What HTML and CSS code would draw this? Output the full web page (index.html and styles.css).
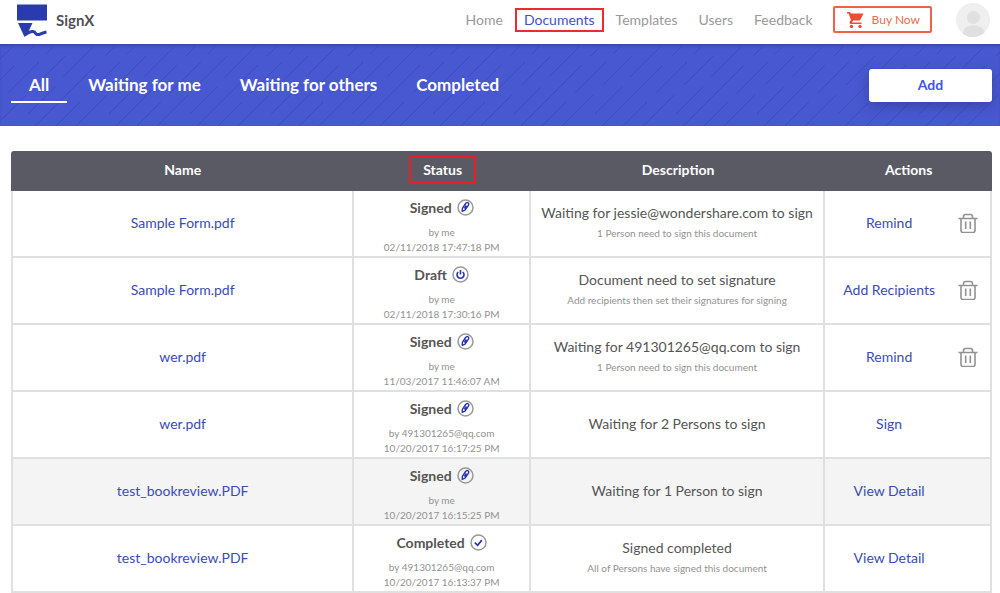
FILE: index.html
```html
<!DOCTYPE html>
<html lang="en">
<head>
<meta charset="utf-8">
<title>SignX – Documents</title>
<link rel="stylesheet" href="styles.css">
</head>
<body>
<svg class="sprite" aria-hidden="true">
  <symbol id="pen" viewBox="0 0 17 17">
    <circle cx="8.500" cy="8.500" r="7.500" fill="none" stroke="#999" stroke-width="1.500"/>
    <path d="M5.200 12.300l.2-3 3.200-4.800c.7-1 1.700-1.300 2.500-.7.8.5.900 1.500.2 2.500l-3.300 4.800zM7.400 9.500l2-3" fill="none" stroke="#2634b4" stroke-width="1.400" stroke-linejoin="round"/>
  </symbol>
  <symbol id="power" viewBox="0 0 17 17">
    <circle cx="8.500" cy="8.500" r="7.500" fill="none" stroke="#999" stroke-width="1.500"/>
    <path d="M6.300 6a3.500 3.500 0 1 0 4.400 0M8.500 4v4.500" fill="none" stroke="#2634b4" stroke-width="1.600"/>
  </symbol>
  <symbol id="check" viewBox="0 0 17 17">
    <circle cx="8.500" cy="8.500" r="7.500" fill="none" stroke="#999" stroke-width="1.500"/>
    <path d="M4.800 8.600l2.800 2.700 4.300-5.200" fill="none" stroke="#2634b4" stroke-width="1.700"/>
  </symbol>
  <symbol id="trash" viewBox="0 0 20 20">
    <path d="M.5 5.500h19M5.500 5V3.500q0-2 2-2h5q2 0 2 2V5M3 5.500v12q0 2 2 2h10q2 0 2-2v-12M7.700 8.500v7.500M12.300 8.500v7.500" fill="none" stroke="#929292" stroke-width="1.600"/>
  </symbol>
</svg>

<header class="topbar">
  <a class="brand" href="#">
    <svg class="logo" viewBox="0 0 32 33" aria-hidden="true">
      <path d="M1 1h30v16H1zM2 19.500h14.500l-4.500 9.500-3.500 4.500z" fill="#2a3bb0"/>
      <path d="M8.500 31.500C12 29.500 14 27.500 17 28s2 2.500 4 3c3 .6 3.500-1.500 9.500-2.500" fill="none" stroke="#2a3bb0" stroke-width="3"/>
    </svg>
    <span class="brand-name">SignX</span>
  </a>
  <nav class="nav">
    <a href="#">Home</a>
    <a class="current" href="#">Documents</a>
    <a href="#">Templates</a>
    <a href="#">Users</a>
    <a href="#">Feedback</a>
  </nav>
  <button class="buy" type="button">
    <svg class="cart" viewBox="0 0 18 18" aria-hidden="true">
      <path d="M1 1h3l1 1.500h12.500L14 9.500H7l-1 2h9.500V13H4.500q-1.500-.5-.8-2l1.200-2.200L2.600 2.500H1z" fill="#f04b34"/>
      <circle cx="5.500" cy="15.500" r="1.700" fill="#f04b34"/><circle cx="14" cy="15.500" r="1.700" fill="#f04b34"/>
    </svg>
    Buy Now
  </button>
  <button class="avatar" type="button" aria-label="Account">
    <svg viewBox="0 0 34 34" aria-hidden="true">
      <circle cx="17" cy="17" r="17" fill="#efefef"/>
      <circle cx="17.500" cy="14.500" r="6.500" fill="#e0e0e0"/>
      <path d="M7 31c.5-6 4-8.500 10.500-8.500S28 25 28.500 29.500A17 17 0 0 1 7 31z" fill="#e0e0e0"/>
    </svg>
  </button>
</header>

<section class="banner">
  <svg class="hatch" aria-hidden="true">
    <defs>
      <path id="strokes" d="M42 0L9 33M42 21L-19 82M63 0L51 12M83 0L73 10M66 18L35 49M92 12L63 41M53 51L22 82M82 43L55 70M26 58L2 82"/>
      <pattern id="rain" width="81" height="82" patternUnits="userSpaceOnUse" patternTransform="translate(54 0)">
        <g fill="none" stroke="#3e4dbd" stroke-width="1">
          <use href="#strokes"/><use href="#strokes" x="-81"/><use href="#strokes" x="81"/>
        </g>
      </pattern>
    </defs>
    <rect width="100%" height="100%" fill="url(#rain)"/>
  </svg>
  <nav class="tabs">
    <a class="active" href="#">All</a>
    <a href="#">Waiting for me</a>
    <a href="#">Waiting for others</a>
    <a href="#">Completed</a>
  </nav>
  <button class="add" type="button">Add</button>
</section>

<main class="content">
  <table class="docs">
    <colgroup><col class="c-name"><col class="c-status"><col class="c-desc"><col class="c-actions"></colgroup>
    <thead>
      <tr><th>Name</th><th><span class="marked">Status</span></th><th>Description</th><th>Actions</th></tr>
    </thead>
    <tbody>
      <tr>
        <td><a href="#">Sample Form.pdf</a></td>
        <td><div class="state">Signed <svg><use href="#pen"/></svg></div><div class="meta">by me<br>02/11/2018 17:47:18 PM</div></td>
        <td>Waiting for jessie@wondershare.com to sign<div class="note">1 Person need to sign this document</div></td>
        <td><div class="actions"><a href="#">Remind</a><button type="button" aria-label="Delete"><svg><use href="#trash"/></svg></button></div></td>
      </tr>
      <tr>
        <td><a href="#">Sample Form.pdf</a></td>
        <td><div class="state">Draft <svg><use href="#power"/></svg></div><div class="meta">by me<br>02/11/2018 17:30:16 PM</div></td>
        <td>Document need to set signature<div class="note">Add recipients then set their signatures for signing</div></td>
        <td><div class="actions"><a href="#">Add Recipients</a><button type="button" aria-label="Delete"><svg><use href="#trash"/></svg></button></div></td>
      </tr>
      <tr>
        <td><a href="#">wer.pdf</a></td>
        <td><div class="state">Signed <svg><use href="#pen"/></svg></div><div class="meta">by me<br>11/03/2017 11:46:07 AM</div></td>
        <td>Waiting for 491301265@qq.com to sign<div class="note">1 Person need to sign this document</div></td>
        <td><div class="actions"><a href="#">Remind</a><button type="button" aria-label="Delete"><svg><use href="#trash"/></svg></button></div></td>
      </tr>
      <tr>
        <td><a href="#">wer.pdf</a></td>
        <td><div class="state">Signed <svg><use href="#pen"/></svg></div><div class="meta">by 491301265@qq.com<br>10/20/2017 16:17:25 PM</div></td>
        <td>Waiting for 2 Persons to sign</td>
        <td><div class="actions"><a href="#">Sign</a></div></td>
      </tr>
      <tr class="hovered">
        <td><a href="#">test_bookreview.PDF</a></td>
        <td><div class="state">Signed <svg><use href="#pen"/></svg></div><div class="meta">by me<br>10/20/2017 16:15:25 PM</div></td>
        <td>Waiting for 1 Person to sign</td>
        <td><div class="actions"><a href="#">View Detail</a></div></td>
      </tr>
      <tr>
        <td><a href="#">test_bookreview.PDF</a></td>
        <td><div class="state">Completed <svg><use href="#check"/></svg></div><div class="meta">by 491301265@qq.com<br>10/20/2017 16:13:37 PM</div></td>
        <td>Signed completed<div class="note">All of Persons have signed this document</div></td>
        <td><div class="actions"><a href="#">View Detail</a></div></td>
      </tr>
    </tbody>
  </table>
</main>
</body>
</html>
```
FILE: styles.css
```css
* { box-sizing: border-box; }

body {
  margin: 0;
  background: #fff;
  color: #555;
  font: 14px/20px Lato, "Open Sans", sans-serif;
}

a { color: #3a4cb4; text-decoration: none; }
button { padding: 0; border: 0; background: none; font: inherit; cursor: pointer; }
.sprite { display: none; }

.topbar {
  display: flex;
  align-items: center;
  height: 44px;
  padding: 0 10px 5px 16px;
}
.brand { display: flex; align-items: center; gap: 8px; margin-right: auto; color: #50505a; }
.logo { width: 32px; height: 34px; }
.brand-name { font-size: 15px; font-weight: 700; }

.nav { display: flex; gap: 7px; margin-right: 13px; }
.nav a { padding: 0 7px; color: #999; }
.nav .current { color: #3f4fc8; outline: 2px solid #ee2a30; }

.buy {
  display: flex;
  align-items: center;
  gap: 8px;
  height: 27px;
  padding: 0 10px 0 11px;
  border: 2px solid #f0604a;
  border-radius: 2px;
  color: #f06a50;
  font-size: 12px;
}
.cart { width: 18px; height: 18px; }
.avatar { width: 34px; height: 34px; margin-left: 24px; }
.avatar svg { display: block; width: 34px; height: 34px; }

.banner {
  position: relative;
  display: flex;
  align-items: center;
  justify-content: space-between;
  height: 82px;
  padding: 0 8px 0 11px;
  background: #4858d0;
  box-shadow: inset 0 3px 3px -1px #3947a8;
}
.hatch { position: absolute; inset: 0; width: 100%; height: 100%; }
.tabs, .add { position: relative; }
.tabs { display: flex; gap: 3px; }
.tabs a {
  padding: 7px 18px 6px;
  border-bottom: 2px solid transparent;
  color: #fff;
  font-size: 17px;
  font-weight: 700;
}
.tabs .active { border-color: #fff; }
.add {
  width: 123px;
  height: 33px;
  border-radius: 3px;
  background: #fff;
  box-shadow: 0 4px 12px #2c388f99;
  color: #4054e8;
  font-weight: 700;
}

.content { padding: 25px 8px 0 11px; }
.docs {
  width: 100%;
  border-collapse: separate;
  border-spacing: 0;
  table-layout: fixed;
  text-align: center;
}
.c-name { width: 35%; }
.c-status { width: 18%; }
.c-desc { width: 30%; }
.c-actions { width: 17%; }
.docs th { height: 40px; padding: 0 0 2px; background: #5a5a64; color: #fff; font-weight: 700; }
.docs th:first-child { border-top-left-radius: 3px; }
.docs th:last-child { border-top-right-radius: 3px; }
.marked { padding: 3px 12px; outline: 2px solid #ee1c24; }
.docs td {
  height: 67px;
  padding: 0 0 1px;
  border-right: 2px solid #e0e0e0;
  border-bottom: 2px solid #e0e0e0;
}
.docs td:first-child { border-left: 2px solid #e0e0e0; }
.hovered { background: #f4f4f4; }

.state {
  display: flex;
  align-items: center;
  justify-content: center;
  gap: 5px;
  height: 18px;
  margin: 7px 0 8px;
  font-weight: 700;
}
.state svg { width: 17px; height: 17px; }
.meta, .note { color: #929292; font-size: 10px; }
.meta { line-height: 15px; }
.note { line-height: 20px; }

.actions { display: grid; grid-template-columns: 1fr 20px; align-items: center; padding-right: 12px; }
.actions a { padding-right: 5px; }
.actions svg { display: block; width: 20px; height: 20px; }
```
